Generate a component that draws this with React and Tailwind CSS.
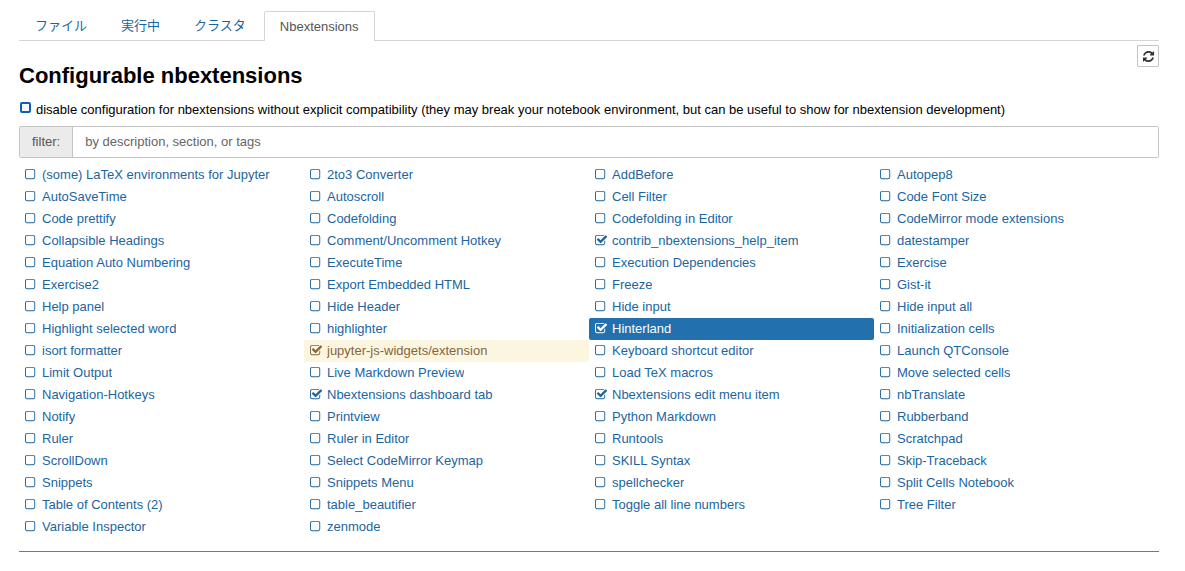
import { useState } from "react";

const SQUARE =
  "M1312 256h-832q-66 0-113 47t-47 113v832q0 66 47 113t113 47h832q66 0 113-47t47-113v-832q0-66-47-113t-113-47zm288 160v832q0 119-84.5 203.5t-203.5 84.5h-832q-119 0-203.5-84.5t-84.5-203.5v-832q0-119 84.5-203.5t203.5-84.5h832q119 0 203.5 84.5t84.5 203.5z";
const CHECKED =
  "M1472 930v318q0 119-84.5 203.5t-203.5 84.5h-832q-119 0-203.5-84.5t-84.5-203.5v-832q0-119 84.5-203.5t203.5-84.5h832q63 0 117 25 15 7 18 23 3 17-9 29l-49 49q-10 10-23 10-3 0-9-2-23-6-45-6h-832q-66 0-113 47t-47 113v832q0 66 47 113t113 47h832q66 0 113-47t47-113v-254q0-13 9-22l64-64q10-10 23-10 6 0 12 3 20 8 20 29zm231-489l-814 814q-24 24-57 24t-57-24l-430-430q-24-24-24-57t24-57l110-110q24-24 57-24t57 24l263 263 647-647q24-24 57-24t57 24l110 110q24 24 24 57t-24 57z";
const REFRESH =
  "M1639 1056q0 5-1 7-64 268-268 434.5t-478 166.5q-146 0-282.5-55t-243.5-157l-129 129q-19 19-45 19t-45-19-19-45v-448q0-26 19-45t45-19h448q26 0 45 19t19 45-19 45l-137 137q71 66 161 102t187 36q134 0 250-65t186-179q11-17 53-117 8-23 30-23h192q13 0 22.5 9.5t9.5 22.5zm25-800v448q0 26-19 45t-45 19h-448q-26 0-45-19t-19-45 19-45l138-138q-148-137-349-137-134 0-250 65t-186 179q-11 17-53 117-8 23-30 23h-199q-13 0-22.5-9.5t-9.5-22.5v-7q65-268 270-434.5t480-166.5q146 0 284 55.5t245 156.5l130-129q19-19 45-19t45 19 19 45z";

const TABS = ["ファイル", "実行中", "クラスタ", "Nbextensions"];

const EXTENSIONS = [
  "(some) LaTeX environments for Jupyter", "2to3 Converter", "AddBefore", "Autopep8",
  "AutoSaveTime", "Autoscroll", "Cell Filter", "Code Font Size",
  "Code prettify", "Codefolding", "Codefolding in Editor", "CodeMirror mode extensions",
  "Collapsible Headings", "Comment/Uncomment Hotkey", "contrib_nbextensions_help_item", "datestamper",
  "Equation Auto Numbering", "ExecuteTime", "Execution Dependencies", "Exercise",
  "Exercise2", "Export Embedded HTML", "Freeze", "Gist-it",
  "Help panel", "Hide Header", "Hide input", "Hide input all",
  "Highlight selected word", "highlighter", "Hinterland", "Initialization cells",
  "isort formatter", "jupyter-js-widgets/extension", "Keyboard shortcut editor", "Launch QTConsole",
  "Limit Output", "Live Markdown Preview", "Load TeX macros", "Move selected cells",
  "Navigation-Hotkeys", "Nbextensions dashboard tab", "Nbextensions edit menu item", "nbTranslate",
  "Notify", "Printview", "Python Markdown", "Rubberband",
  "Ruler", "Ruler in Editor", "Runtools", "Scratchpad",
  "ScrollDown", "Select CodeMirror Keymap", "SKILL Syntax", "Skip-Traceback",
  "Snippets", "Snippets Menu", "spellchecker", "Split Cells Notebook",
  "Table of Contents (2)", "table_beautifier", "Toggle all line numbers", "Tree Filter",
  "Variable Inspector", "zenmode",
];

const INCOMPATIBLE = "jupyter-js-widgets/extension";

function Extension({ name, selected, enabled, onSelect, onToggle }) {
  const tone = selected
    ? "bg-[#2270ad] text-white"
    : name === INCOMPATIBLE
      ? "bg-[#fcf6e0] text-[#86643b]"
      : "text-[#1b659f]";
  return (
    <li className={`flex h-[22px] min-w-0 items-center rounded-[2px] pl-[6px] ${tone}`}>
      <span className="relative mr-1 mb-[2px] size-[13px] shrink-0">
        <input
          type="checkbox"
          aria-label={`Enable ${name}`}
          checked={enabled}
          onChange={onToggle}
          className="absolute inset-0 size-full cursor-pointer appearance-none"
        />
        <svg
          viewBox={enabled ? "64 0 1792 1792" : "192 0 1792 1792"}
          className="pointer-events-none block size-full fill-current"
          aria-hidden="true"
        >
          <path d={enabled ? CHECKED : SQUARE} />
        </svg>
      </span>
      <a
        href="#extension"
        onClick={(event) => {
          event.preventDefault();
          onSelect();
        }}
        className="truncate"
      >
        {name}
      </a>
    </li>
  );
}

export default function App() {
  const [selected, setSelected] = useState("Hinterland");
  const [filter, setFilter] = useState("");
  const [enabled, setEnabled] = useState([
    "contrib_nbextensions_help_item",
    "Hinterland",
    INCOMPATIBLE,
    "Nbextensions dashboard tab",
    "Nbextensions edit menu item",
  ]);
  const toggle = (name) =>
    setEnabled((list) => (list.includes(name) ? list.filter((n) => n !== name) : [...list, name]));
  const visible = EXTENSIONS.filter((name) => name.toLowerCase().includes(filter.toLowerCase()));

  return (
    <div className="bg-white pt-[11px] pr-[26px] pb-[19px] pl-[19px] font-['Liberation_Sans','Noto_Sans_CJK_JP',sans-serif] text-[13px] leading-5 text-black">
      <nav className="flex h-[30px] border-b border-[#d5d5d5]">
        {TABS.map((tab) => (
          <a
            key={tab}
            href="#tab"
            className={
              tab === "Nbextensions"
                ? "-mb-px flex items-center rounded-t-[2px] border border-b-0 border-[#d5d5d5] bg-white px-[15px] text-[#555]"
                : "mr-[2px] flex items-center px-4 text-[#1b659f]"
            }
          >
            {tab}
          </a>
        ))}
      </nav>

      <main>
        <div className="flex items-start justify-between pt-1">
          <h1 className="pt-[18px] text-[22px] leading-[26px] font-bold">Configurable nbextensions</h1>
          <button
            type="button"
            aria-label="Refresh"
            className="flex size-[22px] items-center justify-center rounded-[1px] border border-[#c4c4c4] text-[#333]"
          >
            <svg viewBox="0 0 1792 1792" className="size-[13px] fill-current" aria-hidden="true">
              <path d={REFRESH} />
            </svg>
          </button>
        </div>

        <label className="mt-[11px] flex items-start pl-px">
          <input
            type="checkbox"
            className="mt-[2px] mr-[5px] size-[11px] shrink-0 appearance-none rounded-[2px] border-2 border-[#0a5fc4] bg-white checked:bg-[#0a5fc4]"
          />
          <span>
            disable configuration for nbextensions without explicit compatibility (they may break your notebook
            environment, but can be useful to show for nbextension development)
          </span>
        </label>

        <div className="mt-[6px] flex h-8 rounded-[2px] border border-[#c4c4c4]">
          <label
            htmlFor="filter"
            className="flex items-center border-r border-[#c4c4c4] bg-[#ebebeb] px-3 text-[#555]"
          >
            filter:
          </label>
          <input
            id="filter"
            type="text"
            value={filter}
            onChange={(event) => setFilter(event.target.value)}
            placeholder="by description, section, or tags"
            className="min-w-0 flex-1 bg-white px-3 text-[#555] outline-none placeholder:text-[#666]"
          />
        </div>

        <ul className="mt-[6px] grid grid-cols-4">
          {visible.map((name) => (
            <Extension
              key={name}
              name={name}
              selected={name === selected}
              enabled={enabled.includes(name)}
              onSelect={() => setSelected(name)}
              onToggle={() => toggle(name)}
            />
          ))}
        </ul>
        <hr className="mt-[13px] border-[#777]" />
      </main>
    </div>
  );
}
